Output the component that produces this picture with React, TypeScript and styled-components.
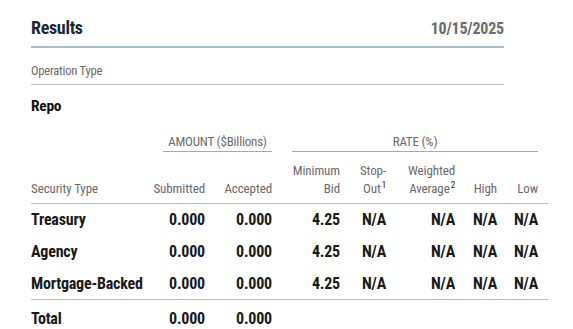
import React from "react";
import styled, { createGlobalStyle } from "styled-components";

const Global = createGlobalStyle`
  html, body { margin: 0; padding: 0; background: #fff; }
  body { font-family: "Roboto Condensed", Roboto, "Liberation Sans", sans-serif; }
`;

const Page = styled.div`
  padding: 15px 0 0 31px;
`;

const TitleBar = styled.div`
  width: 473px;
  display: flex;
  justify-content: space-between;
  align-items: baseline;
  border-bottom: 2px solid #a7bfcc;
  padding-bottom: 6px;
`;

const Title = styled.h2`
  margin: 0;
  font-size: 18px;
  line-height: 25px;
  font-weight: 700;
  color: #1b2836;
  letter-spacing: -0.3px;
`;

const DateText = styled.span`
  font-size: 16px;
  font-weight: 700;
  color: #6b6b6b;
  letter-spacing: -0.2px;
`;

const FieldLabel = styled.div`
  width: 473px;
  margin-top: 15px;
  font-size: 12.5px;
  line-height: 16px;
  color: #6a6a6a;
  border-bottom: 1px solid #bdbdbd;
  padding-bottom: 5px;
  letter-spacing: -0.2px;
`;

const OpType = styled.div`
  margin-top: 11px;
  font-size: 15.5px;
  line-height: 20px;
  font-weight: 700;
  color: #111;
  letter-spacing: -0.3px;
`;

const Table = styled.table`
  margin-top: 18px;
  border-collapse: collapse;
  table-layout: fixed;
  width: 517px;
`;

const GroupCell = styled.th`
  padding: 0 10px;
  font-weight: 400;
  font-size: 13px;
  color: #6a6a6a;
  text-align: center;
  letter-spacing: -0.2px;
`;

const GroupLabel = styled.div`
  border-bottom: 1px solid #a9a9a9;
  line-height: 15px;
  padding-bottom: 2px;
`;

const HeadRow = styled.tr`
  border-bottom: 1px solid #bdbdbd;
`;

const HeadCell = styled.th<{ $left?: boolean }>`
  padding: 10px 10px 5px 0;
  font-weight: 400;
  font-size: 13px;
  line-height: 18px;
  color: #6a6a6a;
  text-align: ${(p) => (p.$left ? "left" : "right")};
  vertical-align: bottom;
  letter-spacing: -0.1px;
  white-space: nowrap;
  sup {
    font-size: 9px;
    line-height: 0;
    color: #222;
    vertical-align: 5px;
    margin-left: 1px;
  }
`;

const BodyRow = styled.tr<{ $rule?: boolean; $total?: boolean }>`
  height: ${(p) => (p.$total ? "34px" : "32px")};
  border-bottom: ${(p) => (p.$rule ? "1px solid #bdbdbd" : "none")};
  td {
    padding-top: ${(p) => (p.$total ? "3px" : "0")};
  }
`;

const Cell = styled.td<{ $left?: boolean }>`
  padding: 0 10px 0 0;
  font-size: 16px;
  font-weight: 700;
  color: #1a1a1a;
  text-align: ${(p) => (p.$left ? "left" : "right")};
  vertical-align: middle;
  letter-spacing: -0.2px;
  white-space: nowrap;
`;

const widths = [122, 62, 67, 68, 46, 69, 42, 41];

const rows = [
  { name: "Treasury", sub: "0.000", acc: "0.000", min: "4.25" },
  { name: "Agency", sub: "0.000", acc: "0.000", min: "4.25" },
  { name: "Mortgage-Backed", sub: "0.000", acc: "0.000", min: "4.25" },
];

export default function App() {
  return (
    <Page>
      <Global />
      <TitleBar>
        <Title>Results</Title>
        <DateText>10/15/2025</DateText>
      </TitleBar>
      <FieldLabel>Operation Type</FieldLabel>
      <OpType>Repo</OpType>
      <Table>
        <colgroup>
          {widths.map((w, i) => (
            <col key={i} style={{ width: w }} />
          ))}
        </colgroup>
        <thead>
          <tr>
            <th />
            <GroupCell colSpan={2}>
              <GroupLabel>AMOUNT ($Billions)</GroupLabel>
            </GroupCell>
            <GroupCell colSpan={5}>
              <GroupLabel>RATE (%)</GroupLabel>
            </GroupCell>
          </tr>
          <HeadRow>
            <HeadCell $left>Security Type</HeadCell>
            <HeadCell>Submitted</HeadCell>
            <HeadCell>Accepted</HeadCell>
            <HeadCell>
              Minimum
              <br />
              Bid
            </HeadCell>
            <HeadCell>
              Stop-
              <br />
              Out<sup>1</sup>
            </HeadCell>
            <HeadCell>
              Weighted
              <br />
              Average<sup>2</sup>
            </HeadCell>
            <HeadCell>High</HeadCell>
            <HeadCell>Low</HeadCell>
          </HeadRow>
        </thead>
        <tbody>
          {rows.map((r, i) => (
            <BodyRow key={r.name} $rule={i === rows.length - 1}>
              <Cell $left>{r.name}</Cell>
              <Cell>{r.sub}</Cell>
              <Cell>{r.acc}</Cell>
              <Cell>{r.min}</Cell>
              <Cell>N/A</Cell>
              <Cell>N/A</Cell>
              <Cell>N/A</Cell>
              <Cell>N/A</Cell>
            </BodyRow>
          ))}
          <BodyRow $total>
            <Cell $left>Total</Cell>
            <Cell>0.000</Cell>
            <Cell>0.000</Cell>
            <Cell />
            <Cell />
            <Cell />
            <Cell />
            <Cell />
          </BodyRow>
        </tbody>
      </Table>
    </Page>
  );
}
